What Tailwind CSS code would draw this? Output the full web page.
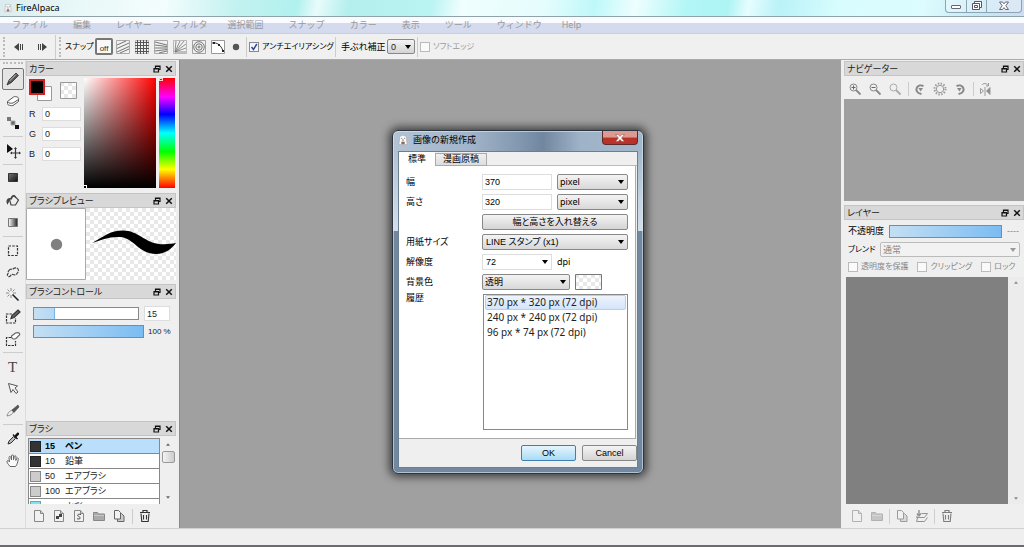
<!DOCTYPE html>
<html lang="ja">
  <head>
    <meta charset="UTF-8" />
    <meta name="viewport" content="width=device-width, initial-scale=1.0" />
    <title>FireAlpaca</title>
    <script src="https://cdn.jsdelivr.net/npm/@tailwindcss/browser@4"></script>
  </head>
  <body
    class="relative flex flex-col h-screen overflow-hidden bg-[#efefef] text-[9px] leading-[12px] text-[#222] font-['Liberation_Sans','Noto_Sans_CJK_JP',sans-serif] [font-feature-settings:'palt']"
  >
    <!-- shared icons -->
    <svg class="absolute h-0 w-0">
      <symbol id="restore" viewBox="0 0 8 8">
        <path d="M2.500 3V1h4.500v3.500H5.500M2.500 1.500H7" fill="none" stroke="#111" stroke-width="1.200" />
        <path d="M1 3.600h4.500V7H1zM1 4h4.500" fill="none" stroke="#111" stroke-width="1.200" />
      </symbol>
      <symbol id="close" viewBox="0 0 8 8">
        <path d="M1.200 1.200l5.600 5.600M6.800 1.200L1.200 6.800" stroke="#111" stroke-width="1.500" />
      </symbol>
      <symbol id="down" viewBox="0 0 6 4"><path d="M0 0h6L3 4z" fill="currentColor" /></symbol>
      <symbol id="page" viewBox="0 0 14 14">
        <path d="M2.500 1.500h6l3 3v8h-9z" fill="#f1f1f1" stroke="#888" />
        <path d="M8.500 1.500v3h3" fill="#ccc" stroke="#888" />
      </symbol>
      <symbol id="folder" viewBox="0 0 14 14">
        <path d="M1.500 11.500v-8h4l1 1.500h6v6.500z" fill="#aaa" stroke="#888" />
        <path d="M2 6.500h10" stroke="#c8c8c8" />
      </symbol>
      <symbol id="copy" viewBox="0 0 14 14">
        <path d="M5.500 4.500h4l2.500 2.500v5.500H5.500z" fill="#ccc" stroke="#666" />
        <path d="M2.500 1.500h4l2 2v6.500h-6z" fill="#f3f3f3" stroke="#666" />
      </symbol>
      <symbol id="trash" viewBox="0 0 14 14">
        <path d="M3 4.500l.8 8h6.400l.8-8M5.500 6v4.500M8.500 6v4.500" fill="#eee" stroke="#333" stroke-width="1.100" />
        <path d="M2 3.500h10M5 3V1.500h4V3" fill="none" stroke="#333" stroke-width="1.200" />
      </symbol>
      <symbol id="alpaca" viewBox="0 0 12 14">
        <path d="M2 1.500l1.500 1L6 1l2.500 1.500 1.500-1v4l1 7H1l1-7z" fill="#fbfbfb" stroke="#aaa" stroke-width=".8" />
        <path d="M4 5h1M7.500 5h1M5 7h2" stroke="#444" />
        <path d="M4 9h4v3H4z" fill="#8d6a5c" />
      </symbol>
      <defs>
        <pattern id="checks" width="8" height="8" patternUnits="userSpaceOnUse">
          <path d="M0 0h8v8H0z" fill="#fff" />
          <path d="M0 0h4v4H0zM4 4h4v4H4z" fill="#e8e8e8" />
        </pattern>
      </defs>
    </svg>

    <!-- window title bar -->
    <header
      class="flex h-[17px] shrink-0 justify-between border-b border-[#8fa3aa] pl-1 bg-[linear-gradient(100deg,#dcecee_0%,#e9f8f8_8%,#f4fdfd_16%,#c3f2f0_23%,#b1f1ee_29%,#e9fbfb_31%,#b4efee_34%,#b9f3f2_42%,#effefe_45%,#e6fdfd_53%,#bff8f9_58%,#eefefe_62%,#b2f6f6_67%,#aef4f5_71%,#e6fdfe_73%,#b9f2f8_76%,#d9fdfe_82%,#dcfcfe_90%,#c6e6f5_96%,#cfdcf2_100%)]"
    >
      <div class="flex items-center gap-1 font-['Noto_Sans',sans-serif] text-black">
        <svg class="h-3 w-2"><use href="#alpaca" /></svg>
        <h1>FireAlpaca</h1>
      </div>
      <div class="mr-[2px] flex h-[13px] rounded-b-sm border border-t-0 border-[#8ba5b2] bg-white/30">
        <button aria-label="最小化" class="flex w-[21px] items-center justify-center border-r border-[#8ba5b2]">
          <svg class="h-3 w-3" viewBox="0 0 12 12"><rect x="1.500" y="5.500" width="9" height="3" rx=".5" fill="#fff" stroke="#667" /></svg>
        </button>
        <button aria-label="元に戻す" class="flex w-5 items-center justify-center border-r border-[#8ba5b2]">
          <svg class="h-3 w-3" viewBox="0 0 12 12" fill="#fff" stroke="#556">
            <path d="M3.500 1.500h7v6h-7z" /><path d="M1.500 3.500h7v6h-7z" /><path d="M3.500 5.500h3v2h-3z" />
          </svg>
        </button>
        <button aria-label="閉じる" class="flex w-[34px] items-center justify-center">
          <svg class="h-3 w-3" viewBox="0 0 12 12">
            <path d="M1.500 2h3L6 3.800 7.500 2h3L7.800 5.700l2.700 3.800h-3L6 7.600 4.500 9.500h-3l2.700-3.800z" fill="#fff" stroke="#667" />
          </svg>
        </button>
      </div>
    </header>

    <nav
      class="flex h-[17px] shrink-0 items-center gap-5 border-b border-[#c9cde0] bg-linear-to-b from-[#fafbfe] from-35% to-[#d5dbef] to-40% pl-3 text-[#999] font-['Noto_Sans','Noto_Sans_CJK_JP',sans-serif] [font-feature-settings:normal]"
    >
      <button class="pr-[5px]">ファイル</button>
      <button class="pr-[5px]">編集</button>
      <button>レイヤー</button>
      <button>フィルタ</button>
      <button class="pr-[5px]">選択範囲</button>
      <button class="pr-[5px]">スナップ</button>
      <button class="pr-[5px]">カラー</button>
      <button class="pr-[5px]">表示</button>
      <button class="pr-[5px]">ツール</button>
      <button>ウィンドウ</button>
      <button>Help</button>
    </nav>

    <!-- toolbar -->
    <div class="flex h-[26px] shrink-0 items-center border-b border-[#aaa] bg-[#f0f0f0] pl-[3px]">
      <div class="h-5 w-[3px] border-l-2 border-dotted border-[#bbb]"></div>
      <button aria-label="戻る" class="ml-[5px] flex w-4 justify-center">
        <svg class="h-2 w-[10px]" viewBox="0 0 10 8" fill="#444"><path d="M5 0v8L0 4zM6 1h1v6H6zM8 1h1v6H8z" /></svg>
      </button>
      <button aria-label="進む" class="ml-[7px] flex w-4 justify-center">
        <svg class="h-2 w-[10px]" viewBox="0 0 10 8" fill="#444"><path d="M5 0v8l5-4zM1 1h1v6H1zM3 1h1v6H3z" /></svg>
      </button>
      <div class="ml-[5px] h-6 w-1 border-l border-[#ccc]"></div>
      <div class="h-5 w-[6px] border-l-2 border-dotted border-[#bbb]"></div>
      <span class="w-[30px] whitespace-nowrap text-[8px] text-black">スナップ</span>
      <button class="flex h-[17px] w-[18px] items-end justify-center rounded-xs border-2 border-[#777] bg-[#f8f8f8] text-[8px] leading-[8px] text-[#333]">off</button>
      <div class="ml-[3px] flex gap-[5px]">
        <button aria-label="平行スナップ"><svg class="h-[14px] w-[14px]" viewBox="0 0 14 14" fill="none" stroke="#777"><path d="M.5.5h13v13H.5z" stroke="#aaa" /><path d="M1 5l9-4M1 8.500L13 3M1 12l12-5.500M4 13l9-4" /></svg></button>
        <button aria-label="十字スナップ"><svg class="h-[14px] w-[14px]" viewBox="0 0 14 14" fill="none" stroke="#555"><path d="M.5.5h13v13H.5z" stroke="#bbb" /><path d="M2.500 0v14M5.500 0v14M8.500 0v14M11.500 0v14M0 2.500h14M0 5.500h14M0 8.500h14M0 11.500h14" /></svg></button>
        <button aria-label="消失点スナップ"><svg class="h-[14px] w-[14px]" viewBox="0 0 14 14" fill="none" stroke="#777"><path d="M.5.5h13v13H.5z" stroke="#aaa" /><path d="M1 2l12 3M1 5l12 1.500M1 8h12M1 11l12-1.500M5 13l8-2" /></svg></button>
        <button aria-label="放射スナップ"><svg class="h-[14px] w-[14px]" viewBox="0 0 14 14" fill="none" stroke="#777" stroke-width=".8"><path d="M.5.5h13v13H.5z" stroke="#aaa" /><path d="M2 12L3 1M2 12L7 1M2 12l9-11M2 12l11-8M2 12l11-4M2 12h11" /></svg></button>
        <button aria-label="同心円スナップ"><svg class="h-[14px] w-[14px]" viewBox="0 0 14 14" fill="none" stroke="#666" stroke-width=".9"><path d="M.5.5h13v13H.5z" stroke="#999" /><circle cx="7" cy="7" r="5.300" /><circle cx="7" cy="7" r="3.200" /><circle cx="7" cy="7" r="1" /></svg></button>
        <button aria-label="曲線スナップ"><svg class="h-[14px] w-[14px]" viewBox="0 0 14 14" fill="none" stroke="#333"><path d="M.5.5h13v13H.5z" fill="#fff" stroke="#999" /><path d="M1 3c5-1 9 2 11 8" /><path d="M2 2h2v2H2zM7 4h2v2H7zM11 10h2v2h-2z" fill="#222" stroke="none" /></svg></button>
        <button aria-label="スナップ設定"><svg class="h-[14px] w-[14px]" viewBox="0 0 14 14"><circle cx="6" cy="7" r="3.200" fill="#555" /></svg></button>
      </div>
      <div class="ml-[2px] h-5 w-[3px] border-l border-[#ccc]"></div>
      <label class="flex w-[86px] items-center gap-[3px] whitespace-nowrap text-[8px] text-black">
        <span class="relative flex">
          <input type="checkbox" checked class="h-[10px] w-[10px] appearance-none border border-[#888] bg-[#f2f5fa]" />
          <svg class="pointer-events-none absolute inset-0 h-[10px] w-[10px]" viewBox="0 0 10 10"><path d="M2.500 5l2 2.500L7.800 2" fill="none" stroke="#33479a" stroke-width="1.500" /></svg>
        </span>
        アンチエイリアシング
      </label>
      <div class="h-5 w-[6px] border-l border-[#ccc]"></div>
      <label for="stab" class="w-[46px] whitespace-nowrap text-black">手ぶれ補正</label>
      <div class="relative">
        <select id="stab" class="block h-[15px] w-7 appearance-none rounded-xs border border-[#888] bg-linear-to-b from-[#f4f4f4] to-[#d4d4d4] pl-[3px]"><option>0</option></select>
        <svg class="pointer-events-none absolute right-1 top-[6px] h-1 w-[6px] text-black"><use href="#down" /></svg>
      </div>
      <div class="ml-[2px] h-5 w-[3px] border-l border-[#ccc]"></div>
      <label class="flex items-center gap-[3px] whitespace-nowrap text-[8px] text-[#999]">
        <input type="checkbox" disabled class="h-[10px] w-[10px] appearance-none border border-[#bbb] bg-[#fafafa]" />
        ソフトエッジ
      </label>
    </div>

    <main class="flex min-h-0 flex-1">
      <!-- tools -->
      <aside class="flex w-[26px] shrink-0 flex-col items-center border-r border-[#ddd] pt-[2px]">
        <div class="mb-1 h-[2px] w-5 border-t-2 border-dotted border-[#bbb]"></div>
        <button aria-label="ペン" class="flex h-[22px] w-[22px] shrink-0 items-center justify-center rounded-xs border border-[#777] bg-[#e4e4e4]">
          <svg class="h-4 w-4" viewBox="0 0 16 16"><path d="M2 14l2-5 7-7 2.500 2.500-7 7z" fill="#555" stroke="#222" stroke-width=".7" /><path d="M4.500 10L11 3.500" stroke="#ccc" /></svg>
        </button>
        <button aria-label="消しゴム" class="flex h-[22px] shrink-0 items-center"><svg class="h-4 w-4" viewBox="0 0 16 16" stroke="#555" fill="#fff"><path d="M2.500 8.500l6-4.500c2-1 6 0 5 2.500v2L8 12.500c-2 .5-6-.5-5.500-2z" /><path d="M2.500 8.500c1 2 4 2 5.500 1.500l5.500-3.500" fill="none" /></svg></button>
        <button aria-label="ドット" class="flex h-[22px] shrink-0 items-center"><svg class="h-4 w-4" viewBox="0 0 16 16"><path d="M2 2h4v4H2z" fill="#777" /><path d="M6 6h4v4H6z" fill="#666" stroke="#aaa" /><path d="M10 10h4v4h-4z" fill="#111" /></svg></button>
        <div class="mt-0.5 mb-[3px] h-px w-5 shrink-0 bg-[#ccc]"></div>
        <button aria-label="移動" class="flex h-[22px] shrink-0 items-center"><svg class="h-4 w-4" viewBox="0 0 16 16"><path d="M2 1v9l6-4z" fill="#111" /><path d="M10.500 5.500v9M6 10h9" stroke="#333" stroke-width="1.200" /><path d="M10.500 4l1.500 2H9zM10.500 16l1.500-2H9zM5 10l2-1.500v3zM16 10l-2-1.500v3z" fill="#333" /></svg></button>
        <div class="mt-0.5 mb-[3px] h-px w-5 shrink-0 bg-[#ccc]"></div>
        <button aria-label="塗り図形" class="flex h-[22px] shrink-0 items-center"><svg class="h-4 w-4" viewBox="0 0 16 16"><defs><linearGradient id="g1" y2="1"><stop stop-color="#777" /><stop offset="1" stop-color="#111" /></linearGradient><linearGradient id="g2"><stop stop-color="#fff" /><stop offset="1" stop-color="#222" /></linearGradient></defs><path d="M3.500 2.500h9v8h-9z" fill="url(#g1)" stroke="#333" /></svg></button>
        <button aria-label="バケツ" class="flex h-[22px] shrink-0 items-center"><svg class="h-4 w-4" viewBox="0 0 16 16" fill="none" stroke="#444" stroke-width="1.200"><path d="M4.500 6.500L9 2.500l4.500 4.500-3 5H6z" fill="#eee" /><path d="M6.500 6.500c-.5-5 4-5 4-1.500" /><path d="M5 5.500c-3 0-3.500 3-2.500 5L4 7.500z" fill="#444" /></svg></button>
        <button aria-label="グラデーション" class="flex h-[22px] shrink-0 items-center"><svg class="h-4 w-4" viewBox="0 0 16 16"><path d="M3.500 3.500h9v8h-9z" fill="url(#g2)" stroke="#777" /></svg></button>
        <div class="mt-0.5 mb-[3px] h-px w-5 shrink-0 bg-[#ccc]"></div>
        <button aria-label="選択" class="flex h-[22px] shrink-0 items-center"><svg class="h-4 w-4" viewBox="0 0 16 16" fill="none" stroke="#333" stroke-width="1.200"><path d="M3.500 3h9v9.500h-9z" stroke-dasharray="2.500 1.200" /></svg></button>
        <button aria-label="投げなわ" class="flex h-[22px] shrink-0 items-center"><svg class="h-4 w-4" viewBox="0 0 16 16" fill="none" stroke="#444" stroke-width="1.200"><path d="M4 5.500c1.500-2.500 3-.5 4-1.500s3.500-2 5 0-.5 3.500-1 4.500-2 2-4 1-2.500 3-4.500 2-1-2.500-.5-3-.5-1.500 1-3z" stroke-dasharray="3.500 .8" /></svg></button>
        <button aria-label="自動選択" class="flex h-[22px] shrink-0 items-center"><svg class="h-4 w-4" viewBox="0 0 16 16" stroke="#888"><path d="M6 1v3M6 8v3M1 6h3M8 6h3M2.500 2.500l2 2M9.500 2.500l-2 2M2.500 9.500l2-2" /><path d="M7.500 7.500l6 6" stroke="#222" stroke-width="1.600" /></svg></button>
        <button aria-label="選択ペン" class="flex h-[22px] shrink-0 items-center"><svg class="h-4 w-4" viewBox="0 0 16 16" fill="none" stroke="#333" stroke-width="1.200"><path d="M7 5H1.500v9h9V9" stroke-dasharray="2.500 1" /><path d="M6 9.500l1-3L13 1l2 2-6 5.500z" fill="#666" /></svg></button>
        <button aria-label="選択消しゴム" class="flex h-[22px] shrink-0 items-center"><svg class="h-4 w-4" viewBox="0 0 16 16" fill="none" stroke="#333" stroke-width="1.200"><path d="M6 6.500H1.500v8h9V10" stroke-dasharray="2.500 1" /><path d="M6.500 5l4-3c2-1 5 0 4 2L11 7.500c-2 1-5 .5-4.500-2.500z" fill="#fff" stroke="#666" /></svg></button>
        <div class="mt-0.5 mb-[3px] h-px w-5 shrink-0 bg-[#ccc]"></div>
        <button aria-label="テキスト" class="h-[22px] shrink-0 text-[15px] leading-[22px] text-[#444] font-['Liberation_Serif',serif]">T</button>
        <button aria-label="操作" class="flex h-[22px] shrink-0 items-center"><svg class="h-4 w-4" viewBox="0 0 16 16" fill="#f4f4f4" stroke="#555"><path d="M3.500 2.500l9 2.500-2.500 2 3 4-2 1.500-3-4-2 3z" /></svg></button>
        <button aria-label="分割" class="flex h-[22px] shrink-0 items-center"><svg class="h-4 w-4" viewBox="0 0 16 16"><path d="M2 13c1-4 3-5 5-6l1.500 2c-1 2-3 3.500-6.500 4z" fill="#eee" stroke="#777" stroke-width=".8" /><path d="M7 7l6-5 1 2-5 5.500z" fill="#555" stroke="#444" stroke-width=".6" /></svg></button>
        <div class="mt-0.5 mb-[3px] h-px w-5 shrink-0 bg-[#ccc]"></div>
        <button aria-label="スポイト" class="flex h-[22px] shrink-0 items-center"><svg class="h-4 w-4" viewBox="0 0 16 16"><path d="M3 13l1-3 4.500-4.500 2 2L6 12z" fill="#bbb" stroke="#333" /><path d="M7.500 4l4.500 4.500 1-1L11.500 6 14 3.500C14.500 2 13 1 12 2L9.500 4.500 8.500 3z" fill="#111" /></svg></button>
        <button aria-label="手のひら" class="flex h-[22px] shrink-0 items-center"><svg class="h-4 w-4" viewBox="0 0 16 16" fill="#fafafa" stroke="#666"><path d="M5 13.500C3 11 1.500 9 2 8s2 0 2.500 1L4 4.500C4 3 5.500 3 5.800 4.500L6.500 7V3c0-1.500 2-1.500 2 0v4l.8-3.500c.3-1.300 1.900-1 1.700.5L10.800 7.500l1-2c.6-1 1.900-.5 1.500.8C12.500 9 12.500 11.500 10.500 13.500z" /></svg></button>
      </aside>

      <!-- left dock -->
      <div class="flex w-[153px] shrink-0 flex-col pt-px pr-[3px]">
        <section class="h-[132px] shrink-0">
          <header class="flex h-[15px] items-center justify-between border border-[#c4c4c4] bg-[#d8d8d8] px-[2px]">
            <h2>カラー</h2>
            <div class="flex gap-1">
              <button aria-label="カラーを切り離す"><svg class="h-2 w-2"><use href="#restore" /></svg></button>
              <button aria-label="カラーを閉じる"><svg class="h-2 w-2"><use href="#close" /></svg></button>
            </div>
          </header>
          <div class="flex gap-[3px] pl-[3px] pt-[2px]">
            <div class="flex w-[52px] flex-col gap-[6px]">
              <div class="flex h-[23px] items-start justify-between pr-1">
                <svg class="h-[23px] w-6" viewBox="0 0 24 23">
                  <path d="M8.500 8.500h14v14h-14z" fill="#fff" stroke="#999" />
                  <path d="M1 2h14v14H1z" fill="#000" stroke="#d21f1f" stroke-width="2" />
                </svg>
                <svg class="mt-1 h-[17px] w-[17px]" viewBox="0 0 17 17"><path d="M.5.5h16v16H.5z" fill="url(#checks)" stroke="#999" /></svg>
              </div>
              <label class="flex h-[14px] items-center justify-between">R<input value="0" class="h-[14px] w-[39px] border border-[#ddd] bg-white pl-[2px]" /></label>
              <label class="flex h-[14px] items-center justify-between">G<input value="0" class="h-[14px] w-[39px] border border-[#ddd] bg-white pl-[2px]" /></label>
              <label class="flex h-[14px] items-center justify-between">B<input value="0" class="h-[14px] w-[39px] border border-[#ddd] bg-white pl-[2px]" /></label>
            </div>
            <div class="flex h-[110px] w-[72px] items-end bg-[linear-gradient(to_top,#000,transparent),linear-gradient(to_right,#fff,#f00)]">
              <div class="h-[3px] w-[3px] border-t border-r border-white"></div>
            </div>
            <div class="h-[110px] w-4 bg-[linear-gradient(to_bottom,#f00,#f0f_17%,#00f_33%,#0ff_50%,#0f0_67%,#ff0_83%,#f00)]">
              <div class="h-[3px] w-1 border border-[#fcc] bg-[#933]"></div>
            </div>
          </div>
        </section>

        <section class="h-[91px] shrink-0">
          <header class="flex h-[15px] items-center justify-between border border-[#c4c4c4] bg-[#d8d8d8] px-[2px]">
            <h2>ブラシプレビュー</h2>
            <div class="flex gap-1">
              <button aria-label="プレビューを切り離す"><svg class="h-2 w-2"><use href="#restore" /></svg></button>
              <button aria-label="プレビューを閉じる"><svg class="h-2 w-2"><use href="#close" /></svg></button>
            </div>
          </header>
          <div class="flex">
            <svg class="h-[72px] w-[60px]" viewBox="0 0 60 72"><path d="M.5.5h59v71H.5z" fill="#fff" stroke="#aaa" /><circle cx="30.500" cy="36.500" r="5.700" fill="#808080" /></svg>
            <svg class="h-[72px] w-[90px]" viewBox="0 0 90 72">
              <path d="M0 0h90v72H0z" fill="url(#checks)" />
              <path d="M6 35C17 29 24 22.500 37 22.500c15 0 22 12 36 13.500 7 .5 12 0 17-1-4 5-10 11-20 11C53 46 48 30 34 29c-11-.5-19 3-28 6z" fill="#000" />
            </svg>
          </div>
        </section>

        <section class="flex-1">
          <header class="flex h-[15px] items-center justify-between border border-[#c4c4c4] bg-[#d8d8d8] px-[2px]">
            <h2>ブラシコントロール</h2>
            <div class="flex gap-1">
              <button aria-label="コントロールを切り離す"><svg class="h-2 w-2"><use href="#restore" /></svg></button>
              <button aria-label="コントロールを閉じる"><svg class="h-2 w-2"><use href="#close" /></svg></button>
            </div>
          </header>
          <div class="flex items-center gap-[5px] pl-[7px] pt-[7px]">
            <input type="range" value="20" aria-label="ブラシサイズ" class="h-[13px] w-[106px] appearance-none border border-[#888] bg-[linear-gradient(to_right,#c6e0f2,#b4d8f4_20px,#7fb4dd_20px,#7fb4dd_21px,#fff_21px)] [&::-webkit-slider-thumb]:opacity-0" />
            <input value="15" aria-label="サイズ" class="h-[15px] w-[26px] border border-[#ddd] bg-white pl-[2px]" />
          </div>
          <div class="flex items-center gap-[4px] pl-[7px] pt-1">
            <input type="range" value="100" aria-label="不透明度" class="h-[13px] w-[111px] appearance-none border border-[#888] bg-linear-to-r from-[#c4dff3] to-[#7abcf2] [&::-webkit-slider-thumb]:opacity-0" />
            <span class="whitespace-nowrap text-[8px]">100 %</span>
          </div>
        </section>

        <section class="h-[107px] shrink-0">
          <header class="flex h-[15px] items-center justify-between border border-[#c4c4c4] bg-[#d8d8d8] px-[2px]">
            <h2>ブラシ</h2>
            <div class="flex gap-1">
              <button aria-label="ブラシを切り離す"><svg class="h-2 w-2"><use href="#restore" /></svg></button>
              <button aria-label="ブラシを閉じる"><svg class="h-2 w-2"><use href="#close" /></svg></button>
            </div>
          </header>
          <div class="mt-[2px] flex h-[66px] pl-[2px]">
            <ul class="w-[132px] overflow-hidden border border-b-0 border-[#888] bg-white">
              <li class="flex h-[15px] items-center border-b border-[#888] bg-[#b9dffc] pl-px font-bold text-black"><span class="h-[11px] w-[11px] border border-[#222] bg-[#333]"></span><span class="w-6 pl-1">15</span>ペン</li>
              <li class="flex h-[15px] items-center border-b border-[#888] pl-px"><span class="h-[11px] w-[11px] border border-[#222] bg-[#333]"></span><span class="w-6 pl-1">10</span>鉛筆</li>
              <li class="flex h-[15px] items-center border-b border-[#888] pl-px"><span class="h-[11px] w-[11px] border border-[#888] bg-[#ccc]"></span><span class="w-6 pl-1">50</span>エアブラシ</li>
              <li class="flex h-[15px] items-center border-b border-[#888] pl-px"><span class="h-[11px] w-[11px] border border-[#888] bg-[#ccc]"></span><span class="w-6 pl-1">100</span>エアブラシ</li>
              <li class="flex h-[15px] items-center pl-px"><span class="h-[11px] w-[11px] border border-[#6aa] bg-[#7fe3f2]"></span><span class="w-6 pl-1">80</span>水彩</li>
            </ul>
            <div class="flex flex-1 flex-col items-center py-[5px]">
              <svg class="h-[3px] w-1 rotate-180 text-[#666]"><use href="#down" /></svg>
              <div class="mt-[5px] h-3 w-[13px] rounded-xs border border-[#999] bg-linear-to-r from-[#f4f4f4] to-[#ccc]"></div>
              <svg class="mt-auto h-[3px] w-1 text-[#666]"><use href="#down" /></svg>
            </div>
          </div>
          <div class="flex h-6 items-center gap-[6px] pl-[6px]">
            <button aria-label="新規"><svg class="h-[14px] w-[14px]"><use href="#page" /></svg></button>
            <button aria-label="ビットマップ"><svg class="h-[14px] w-[14px]" viewBox="0 0 14 14"><use href="#page" width="14" height="14" /><path d="M4 7h3v3H4zM7 5h3v3H7z" fill="#444" /></svg></button>
            <button aria-label="スクリプト"><svg class="h-[14px] w-[14px]" viewBox="0 0 14 14"><use href="#page" width="14" height="14" /><path d="M9 5.500c-3-1-4.500 1-2.500 1.800S9.500 10.500 5 9.800" fill="none" stroke="#444" /></svg></button>
            <button aria-label="フォルダ"><svg class="h-[14px] w-[14px]"><use href="#folder" /></svg></button>
            <button aria-label="複製"><svg class="h-[14px] w-[14px]"><use href="#copy" /></svg></button>
            <div class="-mr-px h-[15px] w-px bg-[#ccc]"></div>
            <button aria-label="削除"><svg class="h-[14px] w-[14px]"><use href="#trash" /></svg></button>
          </div>
        </section>
      </div>

      <!-- canvas -->
      <div class="flex-1 border-l border-[#8a8a8a] bg-[#a0a0a0]"></div>

      <!-- right dock -->
      <div class="flex w-[183px] shrink-0 flex-col pt-px pl-[3px]">
        <header class="flex h-[15px] shrink-0 items-center justify-between border border-[#c4c4c4] bg-[#d8d8d8] px-[2px]">
          <h2>ナビゲーター</h2>
          <div class="flex gap-1">
            <button aria-label="ナビゲーターを切り離す"><svg class="h-2 w-2"><use href="#restore" /></svg></button>
            <button aria-label="ナビゲーターを閉じる"><svg class="h-2 w-2"><use href="#close" /></svg></button>
          </div>
        </header>
        <div class="flex h-[23px] shrink-0 items-center gap-[6px] pl-1 pt-[2px]">
          <button aria-label="拡大"><svg class="h-[14px] w-[14px]" viewBox="0 0 14 14" fill="none" stroke="#888"><circle cx="5.500" cy="5.500" r="3.500" /><path d="M3.500 5.500h4M5.500 3.500v4" stroke="#666" /><path d="M8 8l4.500 4.500" stroke-width="1.800" /></svg></button>
          <button aria-label="縮小"><svg class="h-[14px] w-[14px]" viewBox="0 0 14 14" fill="none" stroke="#888"><circle cx="5.500" cy="5.500" r="3.500" /><path d="M3.500 5.500h4" stroke="#666" /><path d="M8 8l4.500 4.500" stroke-width="1.800" /></svg></button>
          <button aria-label="全体表示"><svg class="h-[14px] w-[14px]" viewBox="0 0 14 14" fill="none" stroke="#aaa"><circle cx="5.500" cy="5.500" r="3.500" /><path d="M8 8l4.500 4.500" stroke-width="1.800" /></svg></button>
          <div class="-mr-[2px] h-[14px] w-px bg-[#ccc]"></div>
          <button aria-label="左回転"><svg class="h-[14px] w-[14px]" viewBox="0 0 14 14" fill="none" stroke="#888" stroke-width="2"><path d="M8.500 12C4.500 11.500 2.500 8.500 3.800 5.800 5 3.500 8 2.800 10.500 4" /><path d="M5.500 6h4.500L7.500 9.500z" fill="#888" stroke="none" /></svg></button>
          <button aria-label="回転リセット"><svg class="h-[14px] w-[14px]" viewBox="0 0 14 14" fill="none" stroke="#999"><circle cx="7" cy="7" r="3.700" /><circle cx="7" cy="7" r="5.500" stroke-width="2" stroke-dasharray="1.400 1.480" /></svg></button>
          <button aria-label="右回転"><svg class="h-[14px] w-[14px]" viewBox="0 0 14 14" fill="none" stroke="#888" stroke-width="2"><path d="M5.500 12c4-.5 6-3.500 4.700-6.200C9 3.500 6 2.800 3.500 4" /><path d="M8.500 6H4l2.500 3.500z" fill="#888" stroke="none" /></svg></button>
          <div class="-mr-[2px] h-[14px] w-px bg-[#ccc]"></div>
          <button aria-label="左右反転"><svg class="h-[14px] w-[14px]" viewBox="0 0 14 14" fill="none" stroke="#999"><path d="M7 5v9M2.500 6.500v5l3-2.500z" /><path d="M12 5.500v7L8.500 9z" fill="#888" /><path d="M4 3c1-2 5-2 6 .5M10.500 1v3H8" /></svg></button>
        </div>
        <div class="h-[102px] shrink-0 bg-[#a0a0a0]"></div>
        <header class="mt-1 flex h-[15px] shrink-0 items-center justify-between border border-[#c4c4c4] bg-[#d8d8d8] px-[2px]">
          <h2>レイヤー</h2>
          <div class="flex gap-1">
            <button aria-label="レイヤーを切り離す"><svg class="h-2 w-2"><use href="#restore" /></svg></button>
            <button aria-label="レイヤーを閉じる"><svg class="h-2 w-2"><use href="#close" /></svg></button>
          </div>
        </header>
        <div class="flex h-[22px] shrink-0 items-center gap-[5px] pl-1">
          <label for="opacity" class="w-9 whitespace-nowrap text-black">不透明度</label>
          <input id="opacity" type="range" value="100" class="h-[13px] w-[113px] appearance-none border border-[#888] bg-linear-to-r from-[#c4dff3] to-[#7abcf2] [&::-webkit-slider-thumb]:opacity-0" />
          <span class="text-[#888]">----</span>
        </div>
        <div class="flex h-[15px] shrink-0 items-center gap-[5px] pl-1 pr-1">
          <label for="blend" class="w-[27px] whitespace-nowrap text-[8px] text-black">ブレンド</label>
          <div class="relative flex-1">
            <select id="blend" disabled class="block h-[15px] w-full appearance-none rounded-xs border border-[#bbb] bg-[#f2f2f2] pl-[2px] text-[#888]"><option>通常</option></select>
            <svg class="pointer-events-none absolute right-1 top-[6px] h-1 w-[6px] text-[#999]"><use href="#down" /></svg>
          </div>
        </div>
        <div class="flex h-5 shrink-0 items-center gap-[9px] whitespace-nowrap pl-1 text-[8px] text-[#888]">
          <label class="flex items-center gap-[3px]"><input type="checkbox" disabled class="h-[10px] w-[10px] appearance-none border border-[#bbb] bg-[#fafafa]" />透明度を保護</label>
          <label class="flex items-center gap-[3px]"><input type="checkbox" disabled class="h-[10px] w-[10px] appearance-none border border-[#bbb] bg-[#fafafa]" />クリッピング</label>
          <label class="flex items-center gap-[3px]"><input type="checkbox" disabled class="h-[10px] w-[10px] appearance-none border border-[#bbb] bg-[#fafafa]" />ロック</label>
        </div>
        <div class="flex flex-1 pl-[2px]">
          <div class="flex-1 bg-[#808080]"></div>
          <div class="flex w-4 flex-col items-center justify-between bg-[#ececec] py-1 text-[#888]">
            <svg class="h-[3px] w-1 rotate-180"><use href="#down" /></svg>
            <svg class="h-[3px] w-1"><use href="#down" /></svg>
          </div>
        </div>
        <div class="flex h-6 shrink-0 items-center gap-[6px] pl-[6px] opacity-60">
          <button aria-label="レイヤー追加"><svg class="h-[14px] w-[14px]"><use href="#page" /></svg></button>
          <button aria-label="フォルダ追加"><svg class="h-[14px] w-[14px]"><use href="#folder" /></svg></button>
          <div class="-mx-px h-[15px] w-px bg-[#bbb]"></div>
          <button aria-label="レイヤー複製"><svg class="h-[14px] w-[14px]"><use href="#copy" /></svg></button>
          <button aria-label="レイヤー統合"><svg class="h-[14px] w-[14px]" viewBox="0 0 14 14" fill="none" stroke="#555"><path d="M6.500 4.500h6l-3 4h-8l1-2M2.500 9l-1 3.500h8l3-4" /><path d="M4 1v5M2 4.500L4 7l2-2.500" stroke-width="1.400" /></svg></button>
          <div class="-mx-px h-[15px] w-px bg-[#bbb]"></div>
          <button aria-label="レイヤー削除"><svg class="h-[14px] w-[14px]"><use href="#trash" /></svg></button>
        </div>
      </div>
    </main>

    <footer class="h-[19px] shrink-0 border-t border-b-2 border-t-[#d0d0d0] border-b-[#6c6a72] bg-[#efefef]"></footer>

    <!-- new image dialog -->
    <div
      role="dialog"
      aria-labelledby="dialog-title"
      class="absolute left-[392px] top-[130px] flex w-[252px] flex-col rounded-md border border-[#2d3640] bg-[linear-gradient(to_bottom,transparent_20px,#c5d3e2_70px,#d3deea_100px,#71889f_100px),linear-gradient(to_right,#b3c3d5,#a3b5ca_30%,#8399b1_50%,#71879f_60%,#9fb3c8_75%,#a3b7cb)] px-[5px] pb-[5px] shadow-[0_0_8px_3px_rgba(0,0,0,0.6),inset_0_0_0_1px_rgba(220,235,245,0.6)]"
    >
      <header class="flex h-5 items-start justify-between">
        <div class="flex items-center gap-[5px] pt-[3px] text-black">
          <svg class="h-3 w-[10px]"><use href="#alpaca" /></svg>
          <h2 id="dialog-title" class="[font-feature-settings:normal]">画像の新規作成</h2>
        </div>
        <button aria-label="ダイアログを閉じる" class="flex h-[14px] w-9 items-center justify-center rounded-b-sm border border-t-0 border-[#5c2a2a] bg-linear-to-b from-[#dc9a90] from-45% to-[#b8322a] to-55%">
          <svg class="h-2 w-[10px]" viewBox="0 0 10 8"><path d="M.5.500h2.700L5 2.500 6.800.500h2.700L6.500 4l3 3.500H6.800L5 5.500 3.200 7.500H.5l3-3.500z" fill="#fff" stroke="#844" stroke-width=".5" /></svg>
        </button>
      </header>
      <div class="border border-[#6b7f92] bg-[#efefef]">
        <div class="flex h-[14px] items-end text-black">
          <button class="h-[14px] w-9 bg-white leading-[13px]">標準</button>
          <button class="h-[13px] w-[52px] border border-[#aaa] bg-linear-to-b from-[#f0f0f0] to-[#ddd] leading-[11px]">漫画原稿</button>
          <div class="flex-1 border-b border-[#bbb]"></div>
        </div>
        <div class="mr-px grid grid-cols-[76px_1fr] gap-y-1 border-b border-r border-[#aaa] bg-white pb-2 pl-[7px] pr-[7px] pt-2 text-black">
          <label for="w" class="leading-4">幅</label>
          <div class="flex gap-[5px]">
            <input id="w" value="370" class="h-4 w-[70px] border border-[#ddd] pl-[2px]" />
            <div class="relative flex-1">
              <select aria-label="幅の単位" class="block h-4 w-full appearance-none rounded-xs border border-[#888] bg-linear-to-b from-[#f4f4f4] to-[#d8d8d8] pl-[2px] font-['Noto_Sans',sans-serif]"><option>pixel</option></select>
              <svg class="pointer-events-none absolute right-1 top-[6px] h-1 w-[6px]"><use href="#down" /></svg>
            </div>
          </div>
          <label for="h" class="leading-4">高さ</label>
          <div class="flex gap-[5px]">
            <input id="h" value="320" class="h-4 w-[70px] border border-[#ddd] pl-[2px]" />
            <div class="relative flex-1">
              <select aria-label="高さの単位" class="block h-4 w-full appearance-none rounded-xs border border-[#888] bg-linear-to-b from-[#f4f4f4] to-[#d8d8d8] pl-[2px] font-['Noto_Sans',sans-serif]"><option>pixel</option></select>
              <svg class="pointer-events-none absolute right-1 top-[6px] h-1 w-[6px]"><use href="#down" /></svg>
            </div>
          </div>
          <button class="col-start-2 h-4 rounded-xs border border-[#888] bg-linear-to-b from-[#f4f4f4] to-[#d4d4d4]">幅と高さを入れ替える</button>
          <label for="paper" class="whitespace-nowrap leading-4">用紙サイズ</label>
          <div class="relative">
            <select id="paper" class="block h-4 w-full appearance-none rounded-xs border border-[#888] bg-linear-to-b from-[#f4f4f4] to-[#d8d8d8] pl-[3px]"><option>LINE スタンプ (x1)</option></select>
            <svg class="pointer-events-none absolute right-1 top-[6px] h-1 w-[6px]"><use href="#down" /></svg>
          </div>
          <label for="dpi" class="leading-4">解像度</label>
          <div class="flex items-center gap-[5px]">
            <div class="relative w-[70px]">
              <select id="dpi" class="block h-4 w-full appearance-none border border-[#ddd] bg-white pl-[3px]"><option>72</option></select>
              <svg class="pointer-events-none absolute right-1 top-[6px] h-1 w-[6px]"><use href="#down" /></svg>
            </div>
            <span class="font-['Noto_Sans',sans-serif]">dpi</span>
          </div>
          <label for="bg" class="leading-4">背景色</label>
          <div class="flex gap-[5px]">
            <div class="relative w-[88px]">
              <select id="bg" class="block h-4 w-full appearance-none rounded-xs border border-[#888] bg-linear-to-b from-[#f4f4f4] to-[#d8d8d8] pl-[2px]"><option>透明</option></select>
              <svg class="pointer-events-none absolute right-1 top-[6px] h-1 w-[6px]"><use href="#down" /></svg>
            </div>
            <svg class="h-4 w-[27px]" viewBox="0 0 27 16"><path d="M.5.5h26v15H.5z" fill="url(#checks)" stroke="#777" /></svg>
          </div>
          <span class="leading-[9px]">履歴</span>
          <ul class="ml-px h-[136px] border border-[#888] bg-white px-px font-['Noto_Sans',sans-serif] text-[10px] text-[#222]">
            <li class="h-[15px] rounded-xs border border-[#b4d0ee] bg-linear-to-b from-[#eef4fd] to-[#d3e4f9] pl-px leading-[13px]">370 px * 320 px (72 dpi)</li>
            <li class="h-[15px] pl-[2px] leading-[15px]">240 px * 240 px (72 dpi)</li>
            <li class="h-[15px] pl-[2px] leading-[15px]">96 px * 74 px (72 dpi)</li>
          </ul>
        </div>
        <div class="flex h-[28px] items-center justify-end gap-[6px] text-black">
          <button class="h-4 w-[55px] rounded-xs border border-[#3c7fb1] bg-linear-to-b from-[#e6f5fd] to-[#a9dbf6]">OK</button>
          <button class="h-4 w-[55px] rounded-xs border border-[#888] bg-linear-to-b from-[#f4f4f4] to-[#d4d4d4]">Cancel</button>
        </div>
      </div>
    </div>
  </body>
</html>
